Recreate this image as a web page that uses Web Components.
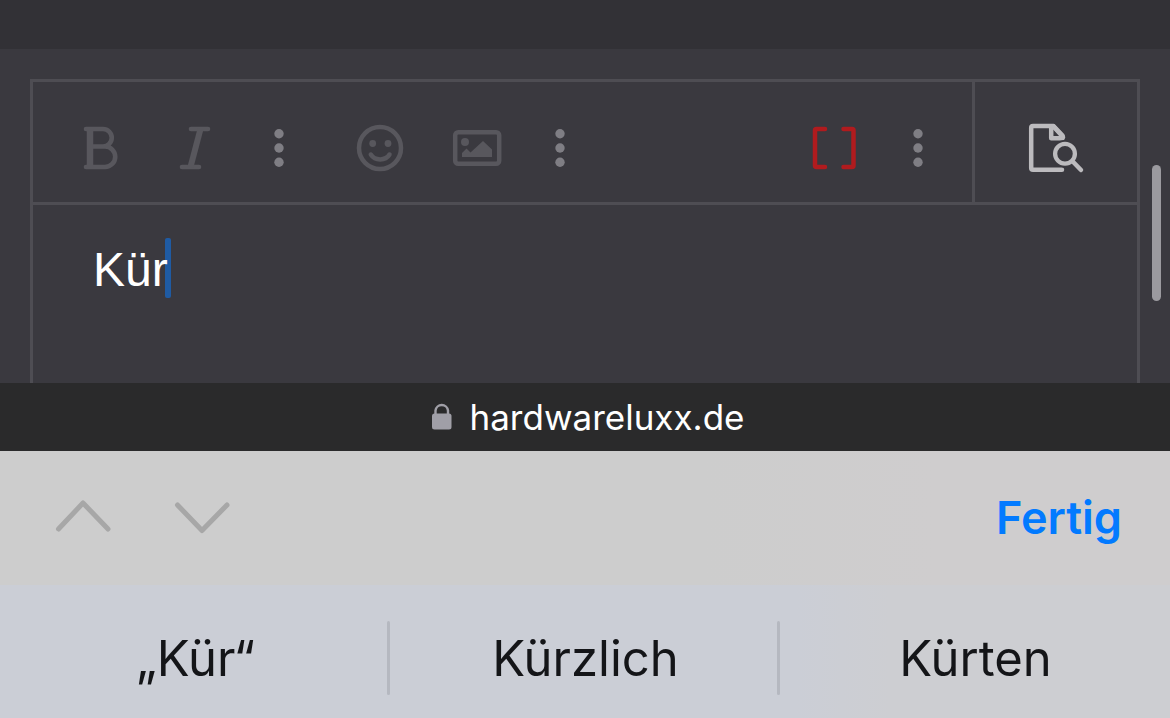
<!DOCTYPE html>
<html lang="de">
<head>
<meta charset="utf-8">
<meta name="viewport" content="width=device-width, initial-scale=1">
<title>hardwareluxx.de</title>
<style>
  body { margin: 0; background: #3a393f; font-family: Inter, "Liberation Sans", sans-serif; }
</style>
</head>
<body>
<phone-screen>
  <forum-page slot="page">
    <post-editor text="Kür"></post-editor>
  </forum-page>
  <address-bar host="hardwareluxx.de"></address-bar>
  <form-assistant done="Fertig"></form-assistant>
  <word-suggestions>
    <word-suggestion>„Kür“</word-suggestion>
    <word-suggestion>Kürzlich</word-suggestion>
    <word-suggestion>Kürten</word-suggestion>
  </word-suggestions>
</phone-screen>

<script>
const define = (name, render) => customElements.define(name, class extends HTMLElement {
  constructor() {
    super();
    this.attachShadow({ mode: 'open' }).innerHTML = render(this);
  }
});

const icons = {
  bold: '<path d="M17 11H34a8.500 8.500 0 0 1 0 17.500H23M34 28.500h2a10 10 0 0 1 0 20.500H17" stroke-width="4.600"/><path d="M21 11V49" stroke-width="6.500" stroke-linecap="butt"/>',
  italic: '<path d="M26 11H43M17 49H34" stroke-width="4.600"/><path d="M35.500 11L25.500 49" stroke-width="6" stroke-linecap="butt"/>',
  more: '<g fill="currentColor" stroke="none"><circle cx="30" cy="15.700" r="4.700"/><circle cx="30" cy="30" r="4.700"/><circle cx="30" cy="44.300" r="4.700"/></g>',
  smile: '<circle cx="30" cy="30" r="21" stroke-width="4.500"/><g fill="currentColor" stroke="none"><circle cx="22.700" cy="25.500" r="3.400"/><circle cx="38" cy="25.500" r="3.400"/></g><path d="M20.800 36.500C25 43 35.500 43 39.500 36.500" stroke-width="4.500"/>',
  image: '<rect x="9.200" y="14.200" width="44" height="31.600" rx="3" stroke-width="4.500"/><circle cx="19" cy="24" r="4" fill="currentColor" stroke="none"/><path d="M16 39V35L20.500 30.500 24.500 34.500 37 23 46 31.500V39Z" fill="currentColor" stroke="none"/>',
  brackets: '<path d="M21 11H12.500Q11 11 11 12.500V47.500Q11 49 12.500 49H21M39.500 11H48Q49.500 11 49.500 12.500V47.500Q49.500 49 48 49H39.500" stroke-width="4.500"/>',
  preview: '<path d="M36 51.800H7Q5.200 51.800 5.200 50V9.800Q5.200 8 7 8H27.500L36.500 17.500V20.300H25.200V8" stroke-width="4.500"/><path d="M27.500 8.500L37 19" stroke-width="4.500"/><circle cx="39" cy="35.700" r="13.800" fill="#3a393f" stroke="none"/><circle cx="39" cy="35.700" r="9.900" stroke-width="4.300"/><path d="M47 43.800L55 52" stroke-width="4.500"/>'
};

define('tool-button', el => `
  <style>
    :host { display: flex; flex: 0 0 96px; color: #58575d; }
    :host([icon="more"]) { flex-basis: 72px; color: #7f7e84; }
    :host([icon="brackets"]) { color: #b01b1e; }
    :host([icon="preview"]) { flex: 1; color: #bcbbbe; }
    button { flex: 1; display: grid; place-items: center; padding: 0; border: 0; background: none; color: inherit; }
    svg { width: 60px; height: 60px; fill: none; stroke: currentColor; stroke-linecap: round; stroke-linejoin: round; }
  </style>
  <button type="button" aria-label="${el.getAttribute('label')}"><svg viewBox="0 0 60 60" aria-hidden="true">${icons[el.getAttribute('icon')]}</svg></button>`);

define('editor-toolbar', () => `
  <style>
    :host { display: flex; height: 120px; border-bottom: 3px solid #4e4d53; }
    .main { flex: 1; display: flex; justify-content: space-between; padding: 12px 18px 0; }
    .groups { display: flex; gap: 17px; }
    .group { display: flex; }
    .side { box-sizing: border-box; flex: 0 0 165px; display: flex; padding-top: 12px; border-left: 3px solid #4e4d53; }
  </style>
  <div class="main">
    <div class="groups">
      <div class="group">
        <tool-button icon="bold" label="Fett"></tool-button>
        <tool-button icon="italic" label="Kursiv"></tool-button>
        <tool-button icon="more" label="Weitere Textoptionen"></tool-button>
      </div>
      <div class="group">
        <tool-button icon="smile" label="Smileys"></tool-button>
        <tool-button icon="image" label="Bild einfügen"></tool-button>
        <tool-button icon="more" label="Weitere Einfügeoptionen"></tool-button>
      </div>
    </div>
    <div class="group">
      <tool-button icon="brackets" label="BBCode umschalten"></tool-button>
      <tool-button icon="more" label="Weitere Optionen"></tool-button>
    </div>
  </div>
  <div class="side"><tool-button icon="preview" label="Vorschau"></tool-button></div>`);

define('post-editor', el => `
  <style>
    :host { flex: 1; display: flex; flex-direction: column; border: 3px solid #4e4d53; border-bottom: 0; }
    .field { flex: 1; display: flex; position: relative; isolation: isolate; }
    textarea { flex: 1; box-sizing: border-box; min-height: 120px; padding: 35px 60px 0; border: 0; outline: 0; resize: none;
      overflow: hidden; background: none; color: #fff; font: 48px/60px "Liberation Sans", sans-serif; }
    .caret { position: absolute; z-index: -1; left: 132px; top: 33px; width: 6px; height: 60px; border-radius: 2px; background: #1f5ba3; }
  </style>
  <editor-toolbar></editor-toolbar>
  <div class="field">
    <textarea aria-label="Beitrag" spellcheck="false">${el.getAttribute('text')}</textarea>
    <span class="caret"></span>
  </div>`);

define('forum-page', () => `
  <style>
    :host { flex: 1; display: flex; flex-direction: column; position: relative; background: #3a393f; }
    .strip { height: 49px; background: #323136; }
    .content { flex: 1; display: flex; padding: 30px 30px 0; }
    .thumb { position: absolute; right: 9px; top: 165px; width: 9px; height: 136px; border-radius: 5px; background: #9b9a9f; }
  </style>
  <div class="strip"></div>
  <div class="content"><slot></slot></div>
  <div class="thumb"></div>`);

define('address-bar', el => `
  <style>
    :host { display: flex; height: 68px; align-items: center; justify-content: center; gap: 18px; padding-left: 6px; background: #2a2a2b; color: #fff; }
    svg { width: 20px; height: 28px; color: #a09fa7; }
    span { font-size: 35px; line-height: 44px; }
  </style>
  <svg viewBox="0 0 20 28" aria-hidden="true"><rect y="10.500" width="19.500" height="16" rx="2.500" fill="currentColor"/><path d="M3.500 12V7.500a6.300 6.300 0 0 1 12.500 0V12" fill="none" stroke="currentColor" stroke-width="2.400"/></svg>
  <span>${el.getAttribute('host')}</span>`);

define('form-assistant', el => `
  <style>
    :host { display: flex; height: 134px; align-items: center; justify-content: space-between; padding: 0 48px 0 50px; background: linear-gradient(90deg, #cdcdcd 60%, #cfcdce 80%); }
    nav { display: flex; gap: 53px; }
    button { padding: 0; border: 0; background: none; font: 600 45px/56px Inter, sans-serif; color: #027aff; }
    nav button { display: flex; color: #a7a7a7; }
    svg { width: 66px; height: 36px; fill: none; stroke: currentColor; stroke-width: 5; stroke-linecap: round; stroke-linejoin: round; }
  </style>
  <nav>
    <button type="button" aria-label="Vorheriges Feld"><svg viewBox="0 0 66 36"><path d="M8.500 29L33 3 58 29"/></svg></button>
    <button type="button" aria-label="Nächstes Feld"><svg viewBox="0 0 66 36"><path d="M8.500 5L33 30.500 58 5"/></svg></button>
  </nav>
  <button type="button">${el.getAttribute('done')}</button>`);

define('word-suggestion', () => `
  <style>
    :host { flex: 1 1 0; display: flex; align-items: center; }
    button { flex: 1; height: 100%; padding: 15px 0 0 4px; border: 0; background: none; color: #141518; font: 49px/60px Inter, sans-serif; }
    i { width: 3px; height: 74px; margin-top: 13px; border-radius: 2px; background: #b5b8c0; }
    :host(:last-of-type) i { background: none; }
  </style>
  <button type="button"><slot></slot></button><i></i>`);

define('word-suggestions', () => `
  <style>
    :host { display: flex; height: 133px; background: linear-gradient(90deg, #cbced6 68%, #cdced2 76%); }
  </style>
  <slot></slot>`);

define('phone-screen', () => `
  <style>
    :host { display: flex; flex-direction: column; min-height: 100vh; }
  </style>
  <slot name="page"></slot>
  <slot></slot>`);
</script>
</body>
</html>
